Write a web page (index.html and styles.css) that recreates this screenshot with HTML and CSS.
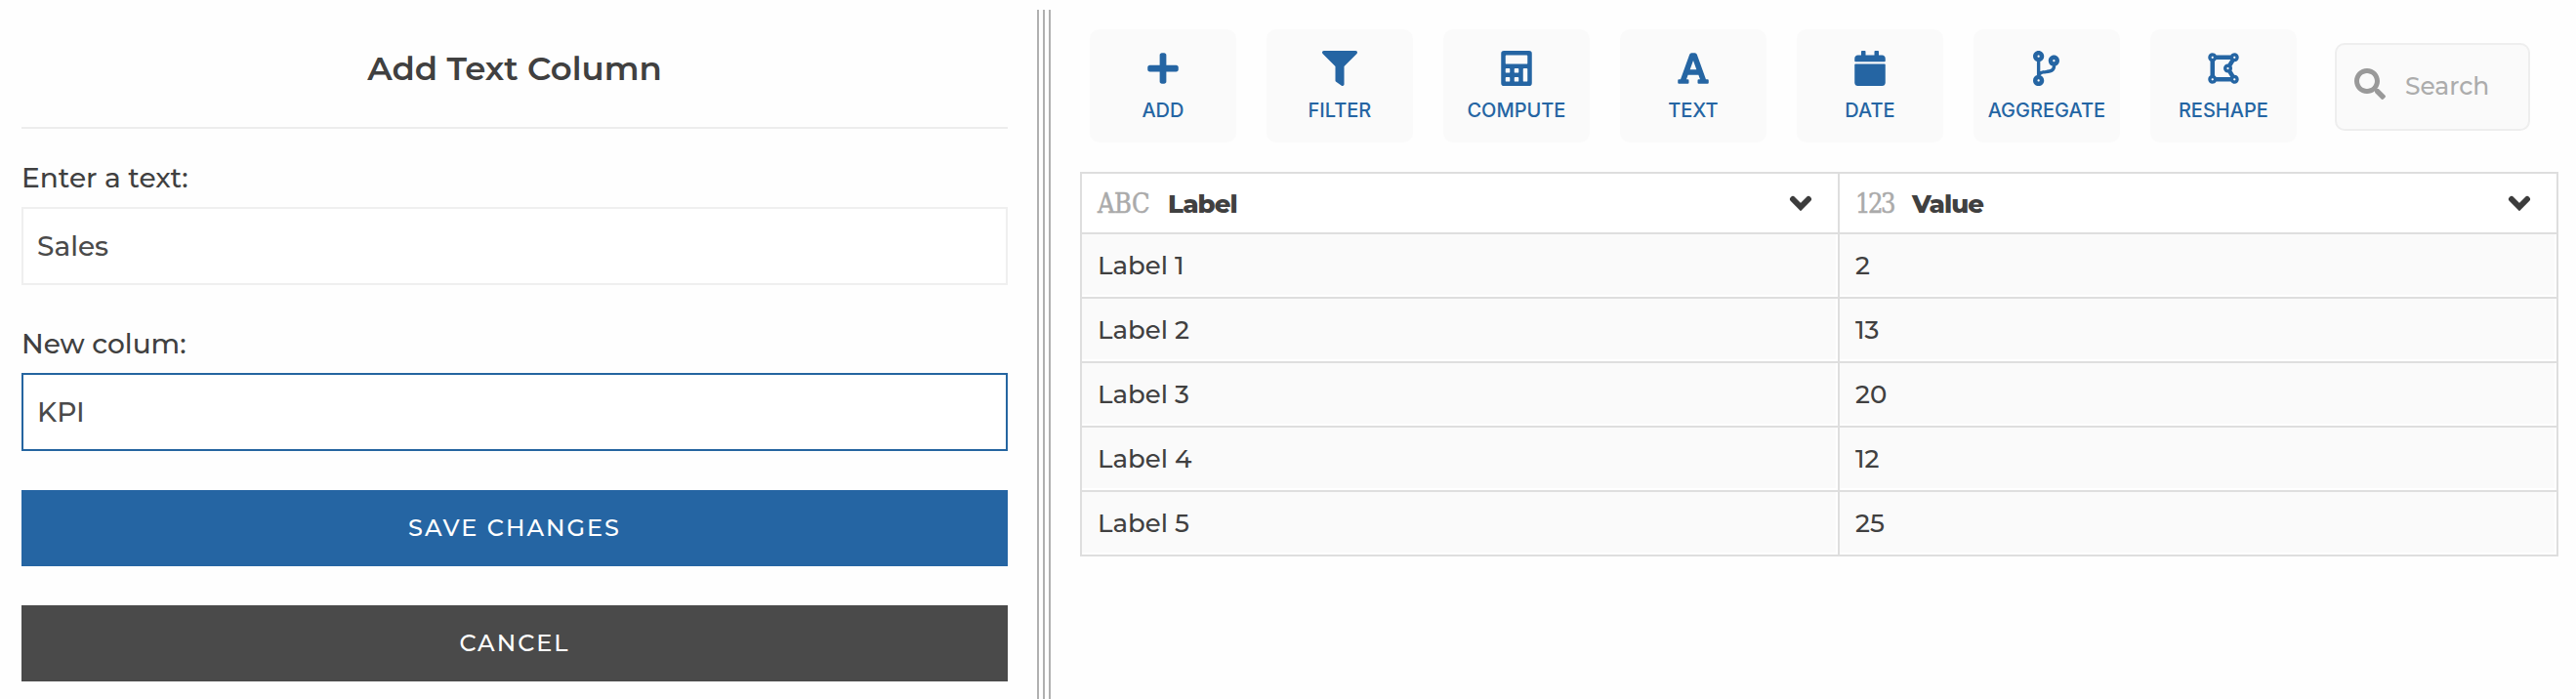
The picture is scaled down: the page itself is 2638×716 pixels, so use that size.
FILE: index.html
```
<!DOCTYPE html>
<html lang="en">
<head>
<meta charset="utf-8">
<title>Add Text Column</title>
<link rel="stylesheet" href="styles.css">
</head>
<body>
<div class="app">
  <form class="panel">
    <h1 class="panel-title">Add Text Column</h1>
    <label class="field-label">Enter a text:</label>
    <div class="field">Sales</div>
    <label class="field-label second">New colum:</label>
    <div class="field active">KPI</div>
    <button type="button" class="btn save">SAVE CHANGES</button>
    <button type="button" class="btn cancel">CANCEL</button>
  </form>
  <div class="divider"><i></i><i></i><i></i></div>
  <main class="content">
    <nav class="toolbar">
      <div class="tool">
        <svg class="icon" width="32" height="36" viewBox="0 0 448 512"><path d="M416 208H272V64c0-17.670-14.330-32-32-32h-32c-17.670 0-32 14.330-32 32v144H32c-17.670 0-32 14.330-32 32v32c0 17.670 14.330 32 32 32h144v144c0 17.670 14.330 32 32 32h32c17.670 0 32-14.330 32-32V304h144c17.670 0 32-14.330 32-32v-32c0-17.670-14.330-32-32-32z"/></svg>
        <span>ADD</span>
      </div>
      <div class="tool">
        <svg class="icon" width="36" height="36" viewBox="0 0 512 512"><path d="M488 0H24C2.700 0-8.100 25.900 7 41L192 226v206c0 7.800 3.800 15.200 10.200 19.700l80 56C298 518.700 320 507.500 320 488V226L505 41c15-15.100 4.300-41-17-41z"/></svg>
        <span>FILTER</span>
      </div>
      <div class="tool">
        <svg class="icon" width="32" height="36" viewBox="0 0 448 512"><path fill-rule="evenodd" d="M40 0h368a40 40 0 0 1 40 40v432a40 40 0 0 1-40 40H40a40 40 0 0 1-40-40V40A40 40 0 0 1 40 0zM76 64a12 12 0 0 0-12 12v104a12 12 0 0 0 12 12h296a12 12 0 0 0 12-12V76a12 12 0 0 0-12-12zM76 256a12 12 0 0 0-12 12v40a12 12 0 0 0 12 12h40a12 12 0 0 0 12-12v-40a12 12 0 0 0-12-12zM204 256a12 12 0 0 0-12 12v40a12 12 0 0 0 12 12h40a12 12 0 0 0 12-12v-40a12 12 0 0 0-12-12zM76 384a12 12 0 0 0-12 12v40a12 12 0 0 0 12 12h40a12 12 0 0 0 12-12v-40a12 12 0 0 0-12-12zM204 384a12 12 0 0 0-12 12v40a12 12 0 0 0 12 12h40a12 12 0 0 0 12-12v-40a12 12 0 0 0-12-12zM332 256a12 12 0 0 0-12 12v168a12 12 0 0 0 12 12h40a12 12 0 0 0 12-12V268a12 12 0 0 0-12-12z"/></svg>
        <span>COMPUTE</span>
      </div>
      <div class="tool">
        <svg class="icon" width="32" height="36" viewBox="0 0 448 512"><path d="M432 416h-23.410L277.880 53.690A32 32 0 0 0 247.580 32h-47.160a32 32 0 0 0-30.300 21.690L39.410 416H16a16 16 0 0 0-16 16v32a16 16 0 0 0 16 16h128a16 16 0 0 0 16-16v-32a16 16 0 0 0-16-16h-19.580l23.300-64h152.560l23.300 64H304a16 16 0 0 0-16 16v32a16 16 0 0 0 16 16h128a16 16 0 0 0 16-16v-32a16 16 0 0 0-16-16zM176.850 272L224 142.510 271.150 272z"/></svg>
        <span>TEXT</span>
      </div>
      <div class="tool">
        <svg class="icon" width="32" height="36" viewBox="0 0 448 512"><path d="M12 192h424c6.600 0 12 5.400 12 12v260c0 26.500-21.500 48-48 48H48c-26.500 0-48-21.500-48-48V204c0-6.600 5.400-12 12-12zm436-44v-36c0-26.500-21.500-48-48-48h-48V12c0-6.600-5.400-12-12-12h-40c-6.600 0-12 5.400-12 12v52H160V12c0-6.600-5.400-12-12-12h-40c-6.600 0-12 5.400-12 12v52H48C21.500 64 0 85.500 0 112v36c0 6.600 5.400 12 12 12h424c6.600 0 12-5.400 12-12z"/></svg>
        <span>DATE</span>
      </div>
      <div class="tool">
        <svg class="icon" width="27" height="36" viewBox="0 0 384 512"><path d="M384 144c0-44.200-35.800-80-80-80s-80 35.800-80 80c0 36.400 24.300 67.100 57.500 76.800-.6 16.100-4.200 28.500-11 36.900-15.400 19.200-49.300 22.400-85.200 25.700-28.200 2.600-57.400 5.400-81.300 16.900v-144c32.500-10.200 56-40.500 56-76.300 0-44.200-35.800-80-80-80S0 35.800 0 80c0 35.800 23.500 66.100 56 76.300v199.300C23.500 365.900 0 396.200 0 432c0 44.200 35.800 80 80 80s80-35.800 80-80c0-34-21.200-63.100-51.200-74.600 3.100-5.200 7.800-9.800 14.900-13.400 16.200-8.200 40.400-10.400 66.100-12.800 42.200-3.900 90-8.400 118.200-43.400 14-17.400 21.100-39.800 21.600-67.900 31.600-10.800 54.400-40.700 54.400-75.900zM80 64c8.800 0 16 7.200 16 16s-7.200 16-16 16-16-7.200-16-16 7.200-16 16-16zm0 384c-8.800 0-16-7.200-16-16s7.200-16 16-16 16 7.200 16 16-7.200 16-16 16zm224-320c8.800 0 16 7.200 16 16s-7.200 16-16 16-16-7.200-16-16 7.200-16 16-16z"/></svg>
        <span>AGGREGATE</span>
      </div>
      <div class="tool">
        <svg class="icon" width="32" height="36" viewBox="0 0 448 512"><path d="M384 352c-.35 0-.67.100-1.020.100l-39.200-65.320c5.070-9.170 8.220-19.560 8.220-30.780s-3.140-21.610-8.220-30.780l39.200-65.320c.350.010.670.100 1.020.100 35.350 0 64-28.650 64-64s-28.650-64-64-64c-23.630 0-44.040 12.950-55.120 32H119.120C108.040 44.950 87.630 32 64 32 28.650 32 0 60.650 0 96c0 23.630 12.950 44.040 32 55.120v209.750C12.950 371.960 0 392.370 0 416c0 35.350 28.650 64 64 64 23.630 0 44.040-12.950 55.120-32h209.750c11.090 19.050 31.490 32 55.120 32 35.350 0 64-28.650 64-64 .010-35.350-28.640-64-63.990-64zm-288 8.880V151.120A63.825 63.825 0 0 0 119.120 128h208.360l-38.460 64.100c-.350-.010-.670-.100-1.020-.100-35.350 0-64 28.650-64 64s28.650 64 64 64c.350 0 .670-.100 1.020-.100l38.460 64.100H119.120A63.748 63.748 0 0 0 96 360.880zM272 256c0-8.820 7.180-16 16-16s16 7.180 16 16-7.180 16-16 16-16-7.180-16-16zM400 96c0 8.820-7.180 16-16 16s-16-7.180-16-16 7.180-16 16-16 16 7.180 16 16zM64 80c8.820 0 16 7.180 16 16s-7.180 16-16 16-16-7.180-16-16 7.180-16 16-16zM48 416c0-8.820 7.180-16 16-16s16 7.180 16 16-7.180 16-16 16-16-7.180-16-16zm336 16c-8.820 0-16-7.180-16-16s7.180-16 16-16 16 7.180 16 16-7.180 16-16 16z"/></svg>
        <span>RESHAPE</span>
      </div>
      <div class="search">
        <svg width="32" height="32" viewBox="0 0 512 512"><path d="M505 442.700L405.300 343c-4.500-4.500-10.600-7-17-7H372c27.600-35.300 44-79.700 44-128C416 93.100 322.900 0 208 0S0 93.100 0 208s93.100 208 208 208c48.300 0 92.700-16.400 128-44v16.300c0 6.400 2.500 12.500 7 17l99.700 99.700c9.400 9.400 24.600 9.400 33.900 0l28.300-28.300c9.400-9.400 9.400-24.600.1-34zM208 336c-70.700 0-128-57.200-128-128 0-70.700 57.200-128 128-128 70.700 0 128 57.200 128 128 0 70.700-57.200 128-128 128z"/></svg>
        <span>Search</span>
      </div>
    </nav>
    <section class="table">
      <div class="head"><span class="type">ABC</span><span class="name">Label</span><svg class="chev" width="24" height="16" viewBox="0 0 24 16"><path d="M4 4l8 8 8-8"/></svg></div>
      <div class="head"><span class="type num">123</span><span class="name">Value</span><svg class="chev" width="24" height="16" viewBox="0 0 24 16"><path d="M4 4l8 8 8-8"/></svg></div>
      <div class="cell">Label 1</div><div class="cell">2</div>
      <div class="cell">Label 2</div><div class="cell">13</div>
      <div class="cell">Label 3</div><div class="cell">20</div>
      <div class="cell">Label 4</div><div class="cell">12</div>
      <div class="cell">Label 5</div><div class="cell">25</div>
    </section>
  </main>
</div>
</body>
</html>
```
FILE: styles.css
```
* { box-sizing: border-box; }
body { margin: 0; background: #fefefe; color: #404040; font-family: Montserrat, Inter, sans-serif; font-weight: 500; }
.app { display: flex; height: 716px; overflow: hidden; }

/* Form panel */
.panel { width: 1062px; padding: 0 30px 0 22px; display: flex; flex-direction: column; }
.panel-title { margin: 0; height: 132px; padding-top: 50px; border-bottom: 2px solid #ededed; text-align: center; font-size: 34px; line-height: 40px; font-weight: 600; }
.field-label { height: 80px; padding-top: 34px; font-size: 28px; line-height: 32px; }
.field-label.second { height: 90px; padding-top: 44px; }
.field { height: 80px; border: 2px solid #efefef; padding: 0 14px; font-size: 28px; line-height: 76px; color: #4a4a4a; background: #fff; }
.field.active { border-color: #2565a0; }
.btn { height: 78px; margin: 40px 0 0; padding: 0; border: 0; color: #fff; font: inherit; font-size: 24px; line-height: 78px; letter-spacing: 2px; }
.save { background: #2565a3; }
.cancel { background: #4a4a4a; }

/* Resize handle */
.divider { display: flex; gap: 4px; padding-top: 10px; }
.divider i { width: 2px; background: #b0b0b0; }

/* Toolbar */
.content { flex: 1; padding: 30px 18px 0 30px; }
.toolbar { display: flex; gap: 31.100px; height: 116px; padding-left: 10px; align-items: center; }
.tool { width: 149.900px; height: 116px; border-radius: 10px; background: #fafafa; color: #2565a3; display: flex; flex-direction: column; align-items: center; padding-top: 22px; font: 500 20px/24px Inter, sans-serif; }
.icon { fill: currentColor; margin-bottom: 13px; flex: none; }
.search { width: 200px; height: 90px; margin: 2px 0 0 8px; border: 2px solid #eee; border-radius: 10px; background: #fafafa; display: flex; padding: 24px 18px; gap: 20px; font-size: 25px; line-height: 36px; color: #acacac; }
.search svg { fill: #999; flex: none; }

/* Data table */
.table { margin-top: 30px; display: grid; grid-template-columns: 776px 736px; border: solid #dedede; border-width: 2px 0 0 2px; width: 1514px; }
.head, .cell { border: solid #dedede; border-width: 0 2px 2px 0; padding-left: 16px; }
.head { height: 62px; background: #fff; display: flex; align-items: center; padding-right: 26px; }
.type { width: 72px; padding-top: 2px; color: #aaa; font: 27px/40px "DejaVu Serif Condensed", "DejaVu Serif", serif; font-stretch: condensed; letter-spacing: -.5px; -webkit-text-stroke: .5px #aaa; }
.num { width: 58px; letter-spacing: -2.500px; }
.name { padding-top: 2px; font-size: 26px; font-weight: 800; letter-spacing: -.9px; }
.chev { margin-left: auto; fill: none; stroke: #3c3c3c; stroke-width: 6; stroke-linecap: round; }
.cell { height: 66px; line-height: 65px; font-size: 26px; background: #fafafa; box-shadow: inset -2px -2px #fff; }
```
